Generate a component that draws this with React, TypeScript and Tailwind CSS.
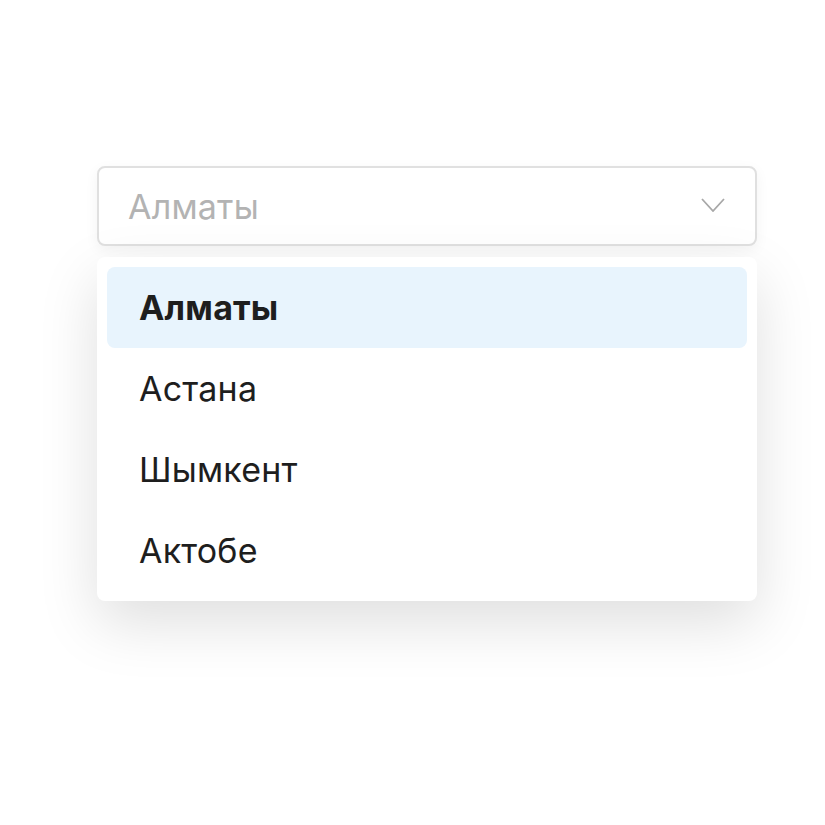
const cities = ["Алматы", "Астана", "Шымкент", "Актобе"];

export default function App() {
  const selected = "Алматы";

  return (
    <div
      className="flex min-h-[825px] w-full bg-white pl-[97px] pt-[166px]"
      style={{ fontFamily: "Inter, 'Noto Sans', sans-serif" }}
    >
      <div className="flex w-[660px] flex-col gap-[11px]">
        <div className="flex h-[80px] items-center justify-between rounded-[8px] border-2 border-[#e0e0e0] bg-white pl-[29px] pr-[30px] shadow-[0_4px_14px_rgba(0,0,0,0.05)]">
          <span className="text-[34px] tracking-[0.2px] text-[#b3b3b3]">{selected}</span>
          <svg className="mb-[3px]" width="24" height="14" viewBox="0 0 24 14" fill="none">
            <path d="M1 1l11 12L23 1" stroke="#a8a8a8" strokeWidth="1.8" />
          </svg>
        </div>

        <div className="flex flex-col rounded-[8px] bg-white p-[10px] shadow-[0_22px_60px_rgba(0,0,0,0.13)]">
          {cities.map((city) => (
            <div
              key={city}
              className={
                city === selected
                  ? "flex h-[81px] items-center rounded-[8px] bg-[#e8f4fd] pl-[32px] text-[34px] font-bold tracking-[0.2px] text-[#1e1e1e]"
                  : "flex h-[81px] items-center rounded-[8px] pl-[32px] text-[34px] tracking-[0.2px] text-[#1e1e1e]"
              }
            >
              {city}
            </div>
          ))}
        </div>
      </div>
    </div>
  );
}
